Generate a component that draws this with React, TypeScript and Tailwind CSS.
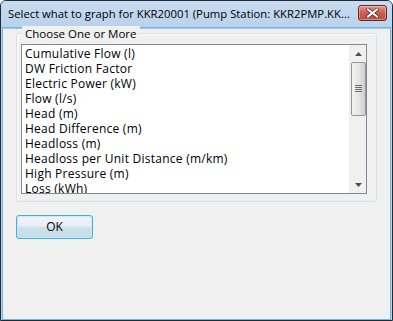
import React from "react";

const items = [
  "Cumulative Flow (l)",
  "DW Friction Factor",
  "Electric Power (kW)",
  "Flow (l/s)",
  "Head (m)",
  "Head Difference (m)",
  "Headloss (m)",
  "Headloss per Unit Distance (m/km)",
  "High Pressure (m)",
  "Loss (kWh)",
];

const font = { fontFamily: '"Segoe UI", "Open Sans", "Noto Sans", sans-serif' };

export default function App() {
  return (
    <div
      className="w-[393px] h-[321px] flex flex-col bg-[#b9d1ea] border border-[#1e2a36] rounded-t-[6px] overflow-hidden text-black"
      style={font}
    >
      {/* title bar */}
      <div className="h-[27px] shrink-0 flex items-center pl-[7px] pr-[5px] bg-gradient-to-b from-[#c8dcf0] to-[#b9d1ea]">
        <div className="flex-1 text-[11.3px] leading-none whitespace-nowrap pb-[2px]">
          Select what to graph for KKR20001 (Pump Station: KKR2PMP.KK...
        </div>
        <div className="w-[29px] h-[16px] mt-[-4px] rounded-[3px] border border-[#6b2119] bg-gradient-to-b from-[#e29a8e] via-[#cb5d4f] to-[#c34a3a] flex items-center justify-center shadow-[inset_0_0_0_1px_rgba(255,255,255,0.35)]">
          <svg width="13" height="10" viewBox="0 0 13 10">
            <path d="M2 1.5 L11 8.5 M11 1.5 L2 8.5" stroke="#5a2a24" strokeWidth="3.6" strokeLinecap="square" />
            <path d="M2 1.5 L11 8.5 M11 1.5 L2 8.5" stroke="#ffffff" strokeWidth="2" strokeLinecap="square" />
          </svg>
        </div>
      </div>
      {/* client */}
      <div className="flex-1 mx-[2px] mb-[1px] bg-[#f0f0f0] border-t border-[#a9c5e2] shadow-[0_0_0_1px_#6fb8e6] flex flex-col pl-[13px] pr-[13px]">
        {/* group box */}
        <div className="relative mt-[4px] h-[169px] border border-[#d5dfe5] rounded-[3px] shadow-[inset_1px_1px_0_#ffffff] pl-[4px] pr-[9px] pt-[10px]">
          <div className="absolute left-[5px] top-[-8px] px-[3px] bg-[#f0f0f0] text-[11.5px] leading-[15px]">
            Choose One or More
          </div>
          <div className="h-[150px] border border-[#828790] bg-white flex">
            <div className="flex-1 overflow-hidden pt-[1px] pl-[3px]">
              {items.map((t) => (
                <div key={t} className="h-[15px] text-[12px] tracking-[0.25px] leading-[15px] whitespace-nowrap">
                  {t}
                </div>
              ))}
            </div>
            <div className="w-[17px] bg-[#f0f0f0] border-l border-[#ededed] flex flex-col items-center">
              <div className="h-[17px] w-full flex items-center justify-center">
                <svg width="7" height="4" viewBox="0 0 7 4">
                  <path d="M0 4 L3.5 0 L7 4 Z" fill="#4d4d4d" />
                </svg>
              </div>
              <div className="w-[15px] h-[54px] rounded-[2px] border border-[#959595] bg-gradient-to-r from-[#f3f3f3] via-[#e6e6e6] to-[#cfcfcf] flex items-center justify-center">
                <svg width="7" height="8" viewBox="0 0 7 8">
                  <path d="M0 0.5 H7 M0 2.5 H7 M0 4.5 H7 M0 6.5 H7" stroke="#6b6b6b" strokeWidth="1" />
                </svg>
              </div>
              <div className="flex-1" />
              <div className="h-[17px] w-full flex items-center justify-center">
                <svg width="7" height="4" viewBox="0 0 7 4">
                  <path d="M0 0 L3.5 4 L7 0 Z" fill="#4d4d4d" />
                </svg>
              </div>
            </div>
          </div>
        </div>
        {/* OK button */}
        <div className="mt-[13px]">
          <div className="w-[77px] h-[24px] rounded-[3px] border border-[#3fb0dd] shadow-[inset_0_0_0_1px_#c9ecfb] bg-[linear-gradient(to_bottom,#f1f3fa_0%,#e9eef6_45%,#cde2ea_50%,#c2dce6_100%)] flex items-center justify-center text-[12px] leading-none">
            OK
          </div>
        </div>
      </div>
    </div>
  );
}
